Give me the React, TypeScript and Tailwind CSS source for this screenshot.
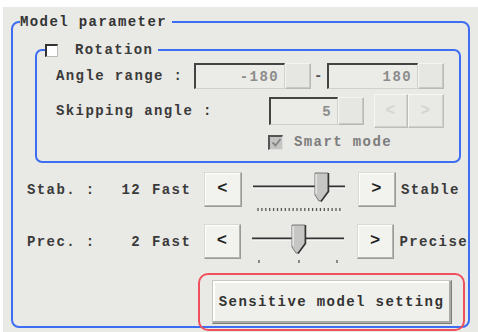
const txt = "font-['Liberation_Mono',monospace] text-[14px] leading-[16px] tracking-[1.4px] font-bold";

function Sunken({ w, h, value }: { w: string; h: string; value: string }) {
  return (
    <div className="flex">
      <div
        className={`${w} ${h} flex items-center justify-end pr-[5px] bg-[#ebebe7] border-t-2 border-l-2 border-t-[#444] border-l-[#444] border-r border-b border-r-[#d0d0cc] border-b-[#d0d0cc] text-[#8c8c8c]`}
      >
        {value}
      </div>
      <div className={`w-[26px] ${h} bg-[#e6e6e2] border border-[#b8b8b4] border-t-[#f4f4f2] border-l-[#f4f4f2] shadow-[inset_-1px_-1px_0_#c8c8c4]`} />
    </div>
  );
}

function ArrowButton({ dir }: { dir: "<" | ">" }) {
  return (
    <div className="w-[38px] h-[35px] flex items-center justify-center bg-[#f2f2ef] border border-[#9a9a96] border-t-[#d8d8d4] border-l-[#d8d8d4] shadow-[inset_-1px_-1px_0_#b4b4b0,inset_1px_1px_0_#ffffff] text-[#222] text-[17px] font-bold pb-[2px]">
      {dir}
    </div>
  );
}

function Slider({ thumb, ticks }: { thumb: number; ticks: number[] }) {
  return (
    <svg width="116" height="35" viewBox="0 0 116 35" overflow="visible" className="shrink-0">
      <line x1="11" y1="14.5" x2="103" y2="14.5" stroke="#333" strokeWidth="2" />
      <line x1="11" y1="16" x2="103" y2="16" stroke="#fff" strokeWidth="1" />
      <g transform={`translate(${thumb},1)`}>
        <path d="M0,0 H13 V18 L6,28 H4 L0,22 Z" fill="#c6c6c4" stroke="#777" strokeWidth="1" />
        <path d="M1,1 V21" stroke="#fff" strokeWidth="1" />
        <path d="M13.5,0 V18.5 L6,28.5" stroke="#333" strokeWidth="1.5" fill="none" />
      </g>
      {ticks.map((x) => (
        <line key={x} x1={x} y1="36" x2={x} y2="39" stroke="#555" strokeWidth="1.3" />
      ))}
    </svg>
  );
}

function ParamRow({ label, value, thumb, ticks, right }: { label: string; value: string; thumb: number; ticks: number[]; right: string }) {
  return (
    <div className="flex items-start h-[35px]">
      <div className="flex items-center h-[35px] text-[#3a3a3a]">
        <span className="w-[100px] pl-[14px]">{label}</span>
        <span className="w-[28px] text-right">{value}</span>
        <span className="w-[63px] pl-[11px]">Fast</span>
      </div>
      <ArrowButton dir="<" />
      <Slider thumb={thumb} ticks={ticks} />
      <ArrowButton dir=">" />
      <div className="h-[35px] flex items-center pl-[5px] text-[#3a3a3a]">{right}</div>
    </div>
  );
}

export default function App() {
  const stabTicks = Array.from({ length: 22 }, (_, i) => 16 + i * 3.9);
  return (
    <div className={`w-[478px] h-[332px] overflow-hidden bg-[#e9e9e5] border-t-[7px] border-l-[3px] border-white pt-[7px] pl-[8px] ${txt}`}>
      <fieldset className="w-[459px] h-[314px] m-0 p-0 min-w-0 border-2 border-[#3d6df2] rounded-[8px]">
        <legend className="ml-[7px] pr-[5px] text-[#333]">Model parameter</legend>

        <fieldset className="mt-[12px] ml-[22px] w-[426px] m-0 p-0 pb-[11px] min-w-0 border-2 border-[#3d6df2] rounded-[7px]">
          <legend className="ml-[8px] pr-[5px] flex items-center h-[16px] text-[#3a3a3a]">
            <span className="w-[13px] h-[13px] bg-white border-t-2 border-l-2 border-[#333] border-r border-b border-r-[#bbb] border-b-[#bbb]" />
            <span className="ml-[17px]">Rotation</span>
          </legend>

          <div className="mt-[5px] flex items-center h-[26px]">
            <span className="w-[157px] pl-[19px] text-[#3a3a3a]">Angle range :</span>
            <Sunken w="w-[91px]" h="h-[26px]" value="-180" />
            <span className="w-[16px] text-center text-[#555]">-</span>
            <Sunken w="w-[91px]" h="h-[26px]" value="180" />
          </div>

          <div className="mt-[5px] flex items-center h-[34px]">
            <span className="w-[232px] pl-[19px] text-[#3a3a3a]">Skipping angle :</span>
            <Sunken w="w-[69px]" h="h-[28px]" value="5" />
            <div className="ml-[10px] flex">
              <div className="w-[34px] h-[34px] flex items-center justify-center border border-[#bdbdb9] border-t-[#f6f6f4] border-l-[#f6f6f4] shadow-[inset_-1px_-1px_0_#cfcfcb] text-[#d4d4d0] text-[16px]">&lt;</div>
              <div className="w-[36px] h-[34px] flex items-center justify-center border border-[#bdbdb9] border-t-[#f6f6f4] border-l-[#f6f6f4] shadow-[inset_-1px_-1px_0_#cfcfcb] text-[#d4d4d0] text-[16px]">&gt;</div>
            </div>
          </div>

          <div className="mt-[6px] flex items-center h-[16px] pl-[231px]">
            <span className="w-[15px] h-[15px] flex items-center justify-center bg-[#c4c4c2] border-t-2 border-l-2 border-[#555] border-r border-b border-r-[#ddd] border-b-[#ddd]">
              <svg width="11" height="11" viewBox="0 0 11 11">
                <path d="M1.5,5.5 L4.5,8.5 L9.5,2" stroke="#888" strokeWidth="2" fill="none" />
              </svg>
            </span>
            <span className="ml-[11px] text-[#7c7c7c]">Smart mode</span>
          </div>
        </fieldset>

        <div className="mt-[9px]">
          <ParamRow label="Stab. :" value="12" thumb={73} ticks={stabTicks} right="Stable" />
        </div>
        <div className="mt-[17px]">
          <ParamRow label="Prec. :" value="2" thumb={51} ticks={[18, 58, 96]} right="Precise" />
        </div>

        <div className="relative mt-[14px] ml-[185px] w-[267px] h-[58px] border-2 border-[#f0505e] rounded-[10px] flex items-center justify-center">
          <div className="w-[240px] h-[44px] flex items-center justify-center bg-[#efefeb] border border-[#7c7c78] border-t-[#c8c8c4] border-l-[#c8c8c4] shadow-[inset_-2px_-2px_0_#aaaaa6,inset_2px_2px_0_#ffffff] text-[#333]">
            Sensitive model setting
          </div>
        </div>
      </fieldset>
    </div>
  );
}
